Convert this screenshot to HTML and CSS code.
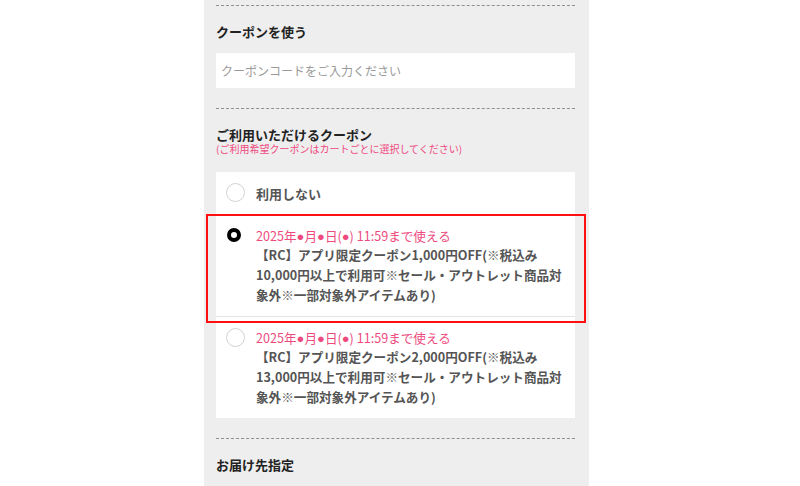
FILE: index.html
```html
<!DOCTYPE html>
<html lang="ja">

<head>
    <meta charset="UTF-8">
    <meta name="viewport" content="width=device-width, initial-scale=1.0">
    <title>クーポン</title>
    <link rel="stylesheet" href="styles.css">
</head>

<body>
    <div class="panel">
        <section class="block">
            <h3 class="block-title">クーポンを使う</h3>
            <input type="text" class="coupon-input" placeholder="クーポンコードをご入力ください">
        </section>

        <section class="block">
            <h3 class="block-title">ご利用いただけるクーポン</h3>
            <p class="block-note">(ご利用希望クーポンはカートごとに選択してください)</p>

            <ul class="coupon-list">
                <li class="coupon-item">
                    <span class="radio"></span>
                    <div class="coupon-body">
                        <p class="coupon-name">利用しない</p>
                    </div>
                </li>
                <li class="coupon-item coupon-item--line">
                    <span class="radio checked"></span>
                    <div class="coupon-body">
                        <p class="coupon-date">2025年<span class="dot">●</span>月<span class="dot">●</span>日(<span class="dot">●</span>) 11:59まで使える</p>
                        <p class="coupon-name">【RC】アプリ限定クーポン1,000円OFF(※税込み10,000円以上で利用可※セール・アウトレット商品対象外※一部対象外アイテムあり)</p>
                    </div>
                    <span class="highlight"></span>
                </li>
                <li class="coupon-item">
                    <span class="radio"></span>
                    <div class="coupon-body">
                        <p class="coupon-date">2025年<span class="dot">●</span>月<span class="dot">●</span>日(<span class="dot">●</span>) 11:59まで使える</p>
                        <p class="coupon-name">【RC】アプリ限定クーポン2,000円OFF(※税込み13,000円以上で利用可※セール・アウトレット商品対象外※一部対象外アイテムあり)</p>
                    </div>
                </li>
            </ul>
        </section>

        <section class="block">
            <h3 class="block-title">お届け先指定</h3>
        </section>
    </div>
</body>

</html>
```

FILE: styles.css
```css
:root {
    --panel-bg: #eeeeee;
    --text-dark: #222222;
    --text-gray: #555555;
    --pink: #ee4a7e;
    --dash: #8f8f8f;
}

body {
    margin: 0;
    padding: 0;
    background: #ffffff;
    font-family: "Noto Sans CJK JP", "Noto Sans", sans-serif;
    color: var(--text-dark);
}

.panel {
    width: 359px;
    margin-left: 204px;
    padding: 5px 14px 0 12px;
    background: var(--panel-bg);
    min-height: 486px;
    box-sizing: content-box;
}

.block {
    border-top: 1px dashed var(--dash);
    padding: 17px 0 20px;
}

.block-title {
    margin: 0;
    font-size: 13px;
    line-height: 17px;
    font-weight: bold;
    color: var(--text-dark);
}

.coupon-input {
    display: block;
    width: 100%;
    height: 35px;
    margin-top: 13px;
    padding: 0 5px;
    border: none;
    box-sizing: border-box;
    background: #ffffff;
    font-family: inherit;
    font-size: 12px;
    color: var(--text-gray);
    outline: none;
}

.coupon-input::placeholder {
    color: #9a9a9a;
}

.block-note {
    margin: 0;
    font-size: 10px;
    line-height: 12px;
    color: var(--pink);
}

.coupon-list {
    list-style: none;
    margin: 17px 0 0;
    padding: 0;
    background: #ffffff;
}

.coupon-item {
    position: relative;
    display: flex;
    align-items: flex-start;
    gap: 11px;
    padding: 11px 4px 11px 10px;
}

.coupon-item--line {
    border-bottom: 1px solid #e4e4e4;
}

.radio {
    flex: none;
    width: 19px;
    height: 19px;
    border: 1.5px solid #d2d2d2;
    border-radius: 50%;
    box-sizing: border-box;
    background: #ffffff;
}

.radio.checked {
    width: 14px;
    height: 14px;
    margin: 2px 4px 0 1px;
    border: 4.5px solid #000000;
}

.coupon-body {
    flex: 1;
    min-width: 0;
}

.coupon-date {
    margin: 0;
    font-size: 12.6px;
    line-height: 19px;
    color: var(--pink);
}

.dot {
    font-family: "Liberation Sans", sans-serif;
    font-size: 13px;
    line-height: 1;
}

.coupon-name {
    margin: 0;
    font-size: 12.6px;
    line-height: 20px;
    font-weight: bold;
    color: var(--text-gray);
}

.coupon-item:first-child .coupon-name {
    font-size: 13px;
    line-height: 21px;
}

.highlight {
    position: absolute;
    top: -1px;
    bottom: -7px;
    left: -10px;
    right: -11px;
    border: 2px solid #ff1010;
    pointer-events: none;
}
```
